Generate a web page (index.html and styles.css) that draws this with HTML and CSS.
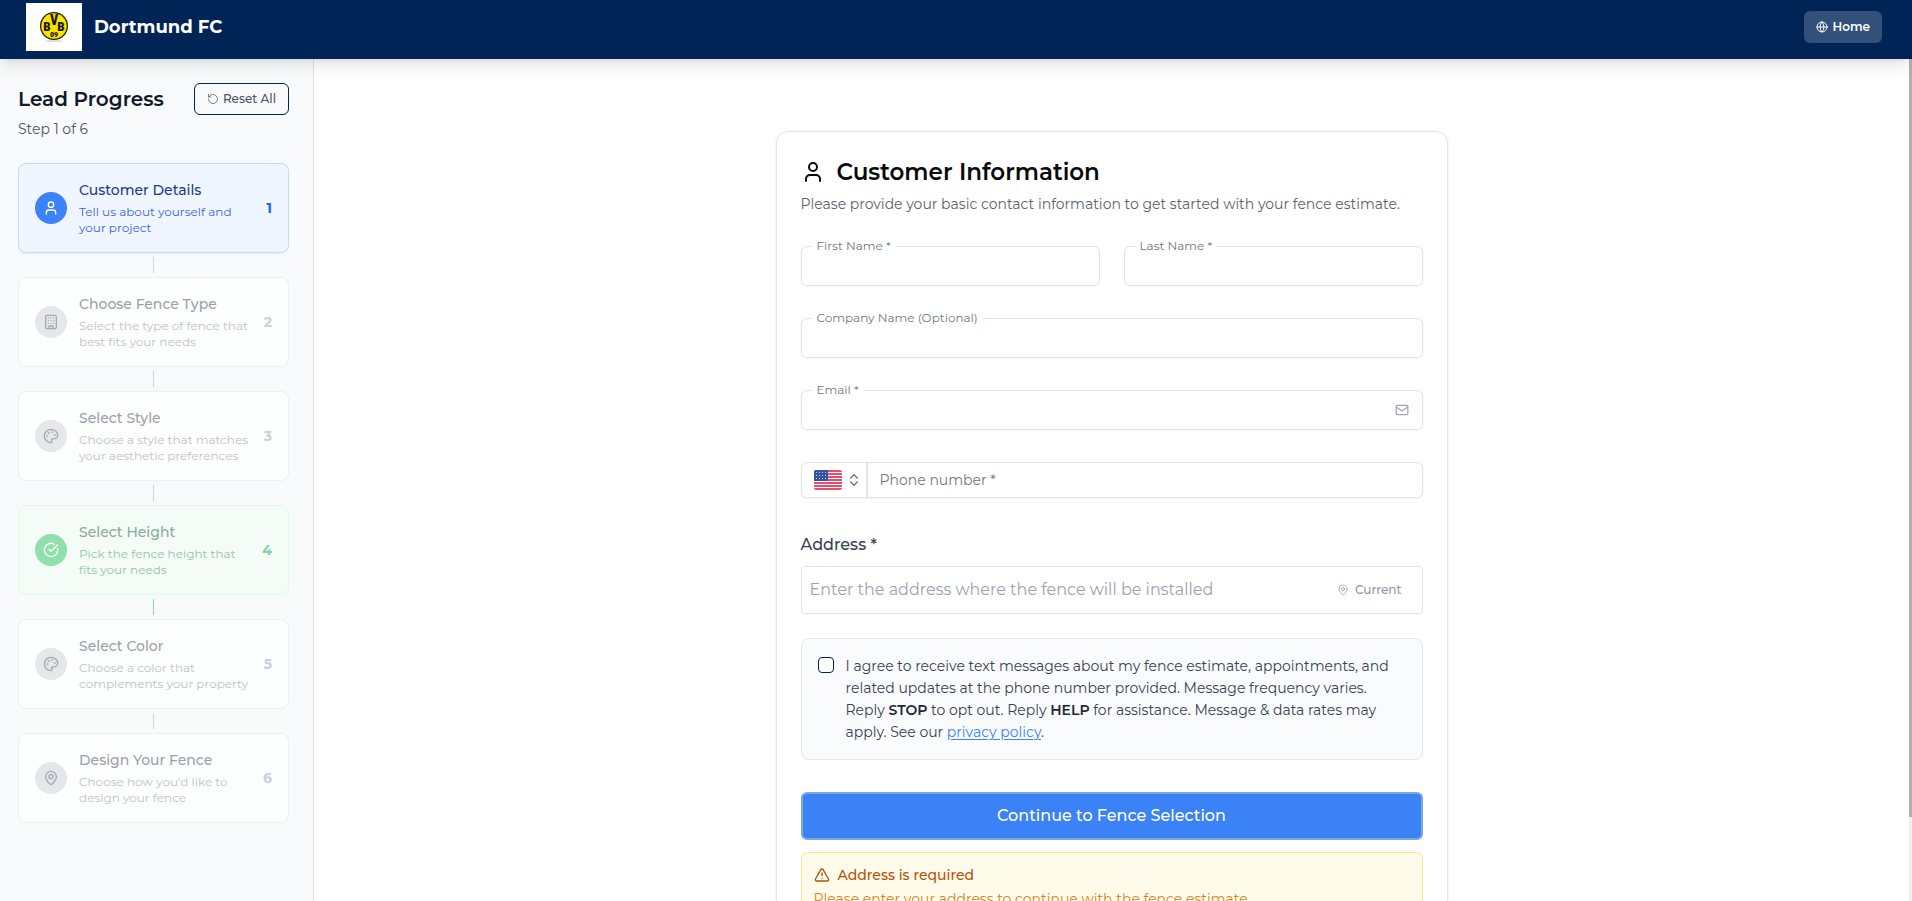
FILE: index.html
```html
<!DOCTYPE html>
<html lang="en">
<head>
    <meta charset="utf-8">
    <meta name="viewport" content="width=device-width, initial-scale=1">
    <title>Dortmund FC - Fence Estimate</title>
    <link rel="stylesheet" href="styles.css">
</head>
<body>
    <!-- shared icons -->
    <svg class="sprite" aria-hidden="true">
        <symbol id="user" viewBox="0 0 24 24"><path d="M19 21v-2a4 4 0 0 0-4-4H9a4 4 0 0 0-4 4v2"/><circle cx="12" cy="7" r="4"/></symbol>
        <symbol id="building" viewBox="0 0 24 24"><rect x="4" y="2" width="16" height="20" rx="2"/><path d="M9 22v-4h6v4M8 6h.01M16 6h.01M12 6h.01M12 10h.01M12 14h.01M16 10h.01M16 14h.01M8 10h.01M8 14h.01"/></symbol>
        <symbol id="palette" viewBox="0 0 24 24"><circle cx="13.5" cy="6.5" r=".5"/><circle cx="17.5" cy="10.5" r=".5"/><circle cx="8.5" cy="7.5" r=".5"/><circle cx="6.5" cy="12.5" r=".5"/><path d="M12 2C6.5 2 2 6.5 2 12s4.5 10 10 10c.926 0 1.648-.746 1.648-1.688 0-.437-.18-.835-.437-1.125-.29-.289-.438-.652-.438-1.125a1.64 1.64 0 0 1 1.668-1.668h1.996c3.051 0 5.555-2.503 5.555-5.554C21.965 6.012 17.461 2 12 2z"/></symbol>
        <symbol id="check" viewBox="0 0 24 24"><path d="M21.801 10A10 10 0 1 1 17 3.335"/><path d="m9 11 3 3L22 4"/></symbol>
        <symbol id="pin" viewBox="0 0 24 24"><path d="M20 10c0 4.993-5.539 10.193-7.399 11.799a1 1 0 0 1-1.202 0C9.539 20.193 4 14.993 4 10a8 8 0 0 1 16 0"/><circle cx="12" cy="10" r="3"/></symbol>
        <symbol id="reset" viewBox="0 0 24 24"><path d="M3 12a9 9 0 1 0 9-9 9.75 9.75 0 0 0-6.74 2.74L3 8"/><path d="M3 3v5h5"/></symbol>
        <symbol id="globe" viewBox="0 0 24 24"><circle cx="12" cy="12" r="10"/><path d="M12 2a14.5 14.5 0 0 0 0 20 14.5 14.5 0 0 0 0-20M2 12h20"/></symbol>
        <symbol id="mail" viewBox="0 0 24 24"><rect x="2" y="4" width="20" height="16" rx="2"/><path d="m22 7-8.97 5.7a1.94 1.94 0 0 1-2.06 0L2 7"/></symbol>
        <symbol id="updown" viewBox="0 0 24 24"><path d="m7 15 5 5 5-5M7 9l5-5 5 5"/></symbol>
        <symbol id="alert" viewBox="0 0 24 24"><path d="m21.73 18-8-14a2 2 0 0 0-3.48 0l-8 14A2 2 0 0 0 4 21h16a2 2 0 0 0 1.73-3M12 9v4M12 17h.01"/></symbol>
    </svg>

    <header class="topbar">
        <div class="logo">
            <svg width="32" height="34" viewBox="0 0 32 34" role="img" aria-label="BVB 09">
                <ellipse cx="16" cy="31" rx="9" ry="1" fill="#ddd"/>
                <circle cx="16" cy="16" r="14" fill="#262400"/>
                <circle cx="16" cy="16" r="12.7" fill="#fbe500"/>
                <g class="logo-text">
                    <text x="9" y="21" font-size="13">B</text>
                    <text x="16" y="15" font-size="14">V</text>
                    <text x="23" y="21" font-size="13">B</text>
                    <text x="16" y="27" font-size="8">09</text>
                </g>
            </svg>
        </div>
        <span class="brand">Dortmund FC</span>
        <a class="home" href="#"><svg class="icon i12"><use href="#globe"/></svg>Home</a>
    </header>

    <div class="shell">
        <aside class="sidebar">
            <div class="side-head">
                <h2>Lead Progress</h2>
                <button type="button" class="reset"><svg class="icon i12 thin"><use href="#reset"/></svg>Reset All</button>
            </div>
            <p class="step-count">Step 1 of 6</p>

            <ol class="steps">
                <li class="step active">
                    <span class="dot"><svg class="icon i16"><use href="#user"/></svg></span>
                    <div class="step-text"><h3>Customer Details</h3><p>Tell us about yourself and<br>your project</p></div>
                    <span class="num">1</span>
                </li>
                <li class="step">
                    <span class="dot"><svg class="icon i16"><use href="#building"/></svg></span>
                    <div class="step-text"><h3>Choose Fence Type</h3><p>Select the type of fence that<br>best fits your needs</p></div>
                    <span class="num">2</span>
                </li>
                <li class="step">
                    <span class="dot"><svg class="icon i16"><use href="#palette"/></svg></span>
                    <div class="step-text"><h3>Select Style</h3><p>Choose a style that matches<br>your aesthetic preferences</p></div>
                    <span class="num">3</span>
                </li>
                <li class="step done">
                    <span class="dot"><svg class="icon i16"><use href="#check"/></svg></span>
                    <div class="step-text"><h3>Select Height</h3><p>Pick the fence height that<br>fits your needs</p></div>
                    <span class="num">4</span>
                </li>
                <li class="step">
                    <span class="dot"><svg class="icon i16"><use href="#palette"/></svg></span>
                    <div class="step-text"><h3>Select Color</h3><p>Choose a color that<br>complements your property</p></div>
                    <span class="num">5</span>
                </li>
                <li class="step">
                    <span class="dot"><svg class="icon i16"><use href="#pin"/></svg></span>
                    <div class="step-text"><h3>Design Your Fence</h3><p>Choose how you'd like to<br>design your fence</p></div>
                    <span class="num">6</span>
                </li>
            </ol>
        </aside>

        <main class="content">
            <form class="card">
                <h1><svg class="icon i24"><use href="#user"/></svg>Customer Information</h1>
                <p class="intro">Please provide your basic contact information to get started with your fence estimate.</p>

                <div class="row">
                    <div class="field">
                        <label for="firstName">First Name *</label>
                        <input type="text" id="firstName" name="firstName">
                    </div>
                    <div class="field">
                        <label for="lastName">Last Name *</label>
                        <input type="text" id="lastName" name="lastName">
                    </div>
                </div>
                <div class="field">
                    <label for="company">Company Name (Optional)</label>
                    <input type="text" id="company" name="company">
                </div>
                <div class="field">
                    <label for="email">Email *</label>
                    <input type="email" id="email" name="email">
                    <svg class="icon i14 mail"><use href="#mail"/></svg>
                </div>

                <div class="phone">
                    <button type="button" class="country" aria-label="Country: United States">
                        <svg class="flag" viewBox="0 0 28 20">
                            <rect width="28" height="20" fill="#fff"/>
                            <path d="M0 1h28M0 4h28M0 7h28M0 10h28M0 13h28M0 16h28M0 19h28" stroke="#e0143c" stroke-width="1.6"/>
                            <rect width="14" height="11" fill="#3453a8"/>
                            <path d="M2 2.5h11M2 5.5h11M2 8.5h11" stroke="#c6d0ea" stroke-width="1" stroke-dasharray="1 2"/>
                        </svg>
                        <svg class="icon i16"><use href="#updown"/></svg>
                    </button>
                    <input type="tel" id="phone" name="phone" placeholder="Phone number *" aria-label="Phone number">
                </div>

                <label class="address-label" for="address">Address *</label>
                <div class="address">
                    <input type="text" id="address" name="address" placeholder="Enter the address where the fence will be installed">
                    <button type="button" class="current"><svg class="icon i12 thin"><use href="#pin"/></svg>Current</button>
                </div>

                <div class="consent">
                    <input type="checkbox" id="consent" name="consent">
                    <label for="consent">I agree to receive text messages about my fence estimate, appointments, and related updates at the phone number provided. Message frequency varies. Reply <strong>STOP</strong> to opt out. Reply <strong>HELP</strong> for assistance. Message &amp; data rates may apply. See our <a href="#">privacy policy</a>.</label>
                </div>

                <button type="submit" class="submit">Continue to Fence Selection</button>

                <div class="warning">
                    <p class="warning-title"><svg class="icon i16"><use href="#alert"/></svg>Address is required</p>
                    <p class="warning-text">Please enter your address to continue with the fence estimate.</p>
                </div>
            </form>
        </main>
        <div class="scroll-track"><div class="scroll-thumb"></div></div>
    </div>
</body>
</html>
```

FILE: styles.css
```css
* {
    box-sizing: border-box;
}
body {
    display: flex;
    flex-direction: column;
    height: 100vh;
    margin: 0;
    overflow: hidden;
    font-family: Montserrat, Inter, sans-serif;
    font-size: 14px;
    line-height: 20px;
    color: #0a0a0a;
    background: #fff;
}
h1, h2, h3, p, ol {
    margin: 0;
    padding: 0;
}
button, input {
    font: inherit;
    color: inherit;
}
button {
    cursor: pointer;
}
.sprite {
    position: absolute;
    width: 0;
    height: 0;
}
.icon {
    flex: none;
    fill: none;
    stroke: currentColor;
    stroke-width: 2;
    stroke-linecap: round;
    stroke-linejoin: round;
}
.i12 {
    width: 12px;
    height: 12px;
}
.i14 {
    width: 14px;
    height: 14px;
}
.i16 {
    width: 16px;
    height: 16px;
}
.i24 {
    width: 24px;
    height: 24px;
}
.thin {
    stroke-width: 1.5;
}

/* header */
.topbar {
    position: relative;
    z-index: 1;
    flex: none;
    display: flex;
    align-items: center;
    height: 59px;
    padding: 0 30px 5px 26px;
    background: #002456;
    box-shadow: 0 10px 15px -3px rgba(0, 0, 0, 0.1), 0 4px 6px -4px rgba(0, 0, 0, 0.1);
}
.logo {
    display: flex;
    align-items: center;
    justify-content: center;
    width: 56px;
    height: 48px;
    background: #fff;
}
.logo-text {
    font-family: "Roboto Condensed", Roboto, sans-serif;
    font-weight: 900;
    text-anchor: middle;
    fill: #1c1a00;
}
.brand {
    margin-left: 12px;
    font-size: 18px;
    font-weight: 700;
    color: #fff;
}
.home {
    display: flex;
    align-items: center;
    gap: 4px;
    height: 32px;
    margin-left: auto;
    padding: 0 12px;
    border-radius: 6px;
    background: #33507a;
    color: #fff;
    font-size: 12px;
    font-weight: 600;
    text-decoration: none;
}

.shell {
    flex: 1;
    display: flex;
    min-height: 0;
}

/* progress sidebar */
.sidebar {
    flex: none;
    width: 314px;
    padding: 24px 24px 24px 18px;
    border-right: 1px solid #e2e4e9;
    background: #f9fafc;
    overflow: hidden;
}
.side-head {
    display: flex;
    align-items: center;
    justify-content: space-between;
}
.side-head h2 {
    font-size: 20px;
    font-weight: 600;
    color: #111827;
}
.reset {
    display: flex;
    align-items: center;
    gap: 4px;
    height: 32px;
    padding: 0 12px;
    border: 1px solid #002456;
    border-radius: 6px;
    background: #f9fafc;
    color: #4b5563;
    font-size: 12px;
    font-weight: 500;
}
.step-count {
    margin: 4px 0 24px;
    color: #4b5563;
}
.steps {
    list-style: none;
}
.step {
    position: relative;
    display: flex;
    align-items: center;
    gap: 12px;
    margin-bottom: 24px;
    padding: 16px;
    border: 1px solid #eeeff2;
    border-radius: 8px;
    background: #fdfefe;
}
/* connector to the next step */
.step:not(:last-child)::after {
    content: "";
    position: absolute;
    top: 100%;
    left: 50%;
    width: 1px;
    height: 16px;
    margin: 5px 0 0 -1px;
    background: #d1d5db;
}
.dot {
    flex: none;
    display: flex;
    align-items: center;
    justify-content: center;
    width: 32px;
    height: 32px;
    border-radius: 50%;
    background: #e5e7eb;
    color: #a3a9b3;
}
.step-text {
    flex: 1;
    white-space: nowrap;
}
.step h3 {
    margin-bottom: 4px;
    font-size: 14px;
    font-weight: 500;
    color: #9ca0aa;
}
.step p {
    font-size: 12px;
    line-height: 16px;
    color: #bfc2ca;
}
.num {
    font-weight: 700;
    color: #cdd0d8;
}
.step.active {
    border-color: #bfdbfe;
    background: #eff6ff;
    box-shadow: 0 1px 2px rgba(0, 0, 0, 0.06);
}
.active .dot {
    background: #3b82f6;
    color: #fff;
}
.active h3 {
    color: #1e3a8a;
}
.active p {
    color: #4162dd;
}
.active .num {
    color: #2563eb;
}
.step.done {
    border-color: #dcfce7;
    background: #f5fbf7;
}
.done .dot {
    background: #8fe0ad;
    color: #fff;
}
.done h3 {
    color: #8cab98;
}
.done p {
    color: #93c6a5;
}
.done .num {
    color: #86d3a2;
}
.step.done::after {
    background: #86dfa8;
}

/* form */
.content {
    flex: 1;
    padding: 72px 24px;
    overflow-y: auto;
    scrollbar-width: none;
}
.card {
    max-width: 672px;
    margin: 0 auto;
    padding: 24px;
    border: 1px solid #e5e5e8;
    border-radius: 12px;
    box-shadow: 0 1px 3px rgba(0, 0, 0, 0.1);
}
.card h1 {
    display: flex;
    align-items: center;
    gap: 12px;
    font-size: 23px;
    line-height: 32px;
    font-weight: 600;
}
.intro {
    margin: 6px 0 32px;
    color: #5b626d;
}
.row {
    display: grid;
    grid-template-columns: 1fr 1fr;
    gap: 24px;
}
.field {
    position: relative;
    margin-bottom: 32px;
}
.field label {
    position: absolute;
    top: -8px;
    left: 12px;
    padding: 0 4px;
    background: #fff;
    font-size: 12px;
    line-height: 16px;
    color: #737780;
}
.field input {
    display: block;
    width: 100%;
    height: 40px;
    padding: 0 12px;
    border: 1px solid #e2e3e6;
    border-radius: 6px;
    background: transparent;
    box-shadow: 0 1px 2px rgba(0, 0, 0, 0.05);
}
.mail {
    position: absolute;
    top: 13px;
    right: 14px;
    color: #9ca3af;
}
.phone {
    display: flex;
    height: 36px;
    margin-bottom: 36px;
    border: 1px solid #e2e3e6;
    border-radius: 6px;
    box-shadow: 0 1px 2px rgba(0, 0, 0, 0.05);
}
.country {
    display: flex;
    align-items: center;
    gap: 4px;
    padding: 0 4px 0 12px;
    border: 0;
    border-right: 2px solid #e2e3e6;
    background: none;
    color: #737373;
}
.flag {
    width: 28px;
    height: 20px;
    border-radius: 2px;
}
.phone input {
    flex: 1;
    border: 0;
    padding: 0 12px;
    background: none;
}
.phone input::placeholder {
    color: #737780;
}
.address-label {
    display: block;
    margin-bottom: 10px;
    font-size: 16px;
    line-height: 22px;
    font-weight: 500;
    color: #374151;
}
.address {
    display: flex;
    align-items: center;
    height: 48px;
    margin-bottom: 24px;
    border: 1px solid #e2e3e6;
    border-radius: 4px;
}
.address input {
    flex: 1;
    padding: 0 8px;
    border: 0;
    background: none;
    font-size: 16px;
}
.address input::placeholder {
    color: #9ca3af;
}
.current {
    display: flex;
    align-items: center;
    gap: 6px;
    padding: 0 20px 0 0;
    border: 0;
    background: none;
    color: #9298a5;
    font-size: 12px;
    font-weight: 500;
}
.consent {
    display: flex;
    gap: 12px;
    margin-bottom: 32px;
    padding: 16px;
    border: 1px solid #e2e8f0;
    border-radius: 8px;
    background: #fafbfd;
    color: #374151;
}
.consent input {
    appearance: none;
    flex: none;
    width: 16px;
    height: 16px;
    margin: 2px 0 0;
    border: 1px solid #002456;
    border-radius: 4px;
    background: #fff;
}
.consent label {
    line-height: 22px;
}
.consent strong {
    font-weight: 600;
    color: #1f2937;
}
.consent a {
    color: #3b82f6;
    text-underline-offset: 2px;
}
.submit {
    display: block;
    width: 100%;
    height: 48px;
    margin-bottom: 12px;
    border: 2px solid #7ba6ea;
    border-radius: 6px;
    background: #3b82f6;
    color: #fff;
    font-size: 16px;
    font-weight: 500;
}
.warning {
    padding: 12px;
    border: 1px solid #fde68a;
    border-radius: 6px;
    background: #fffbeb;
}
.warning-title {
    display: flex;
    align-items: center;
    gap: 8px;
    margin-bottom: 4px;
    font-weight: 500;
    color: #b45309;
}
.warning-text {
    color: #d98324;
}
.scroll-track {
    flex: none;
    width: 3px;
    background: #f0f0f0;
}
.scroll-thumb {
    height: 90%;
    background: #b0b0b0;
}
```
